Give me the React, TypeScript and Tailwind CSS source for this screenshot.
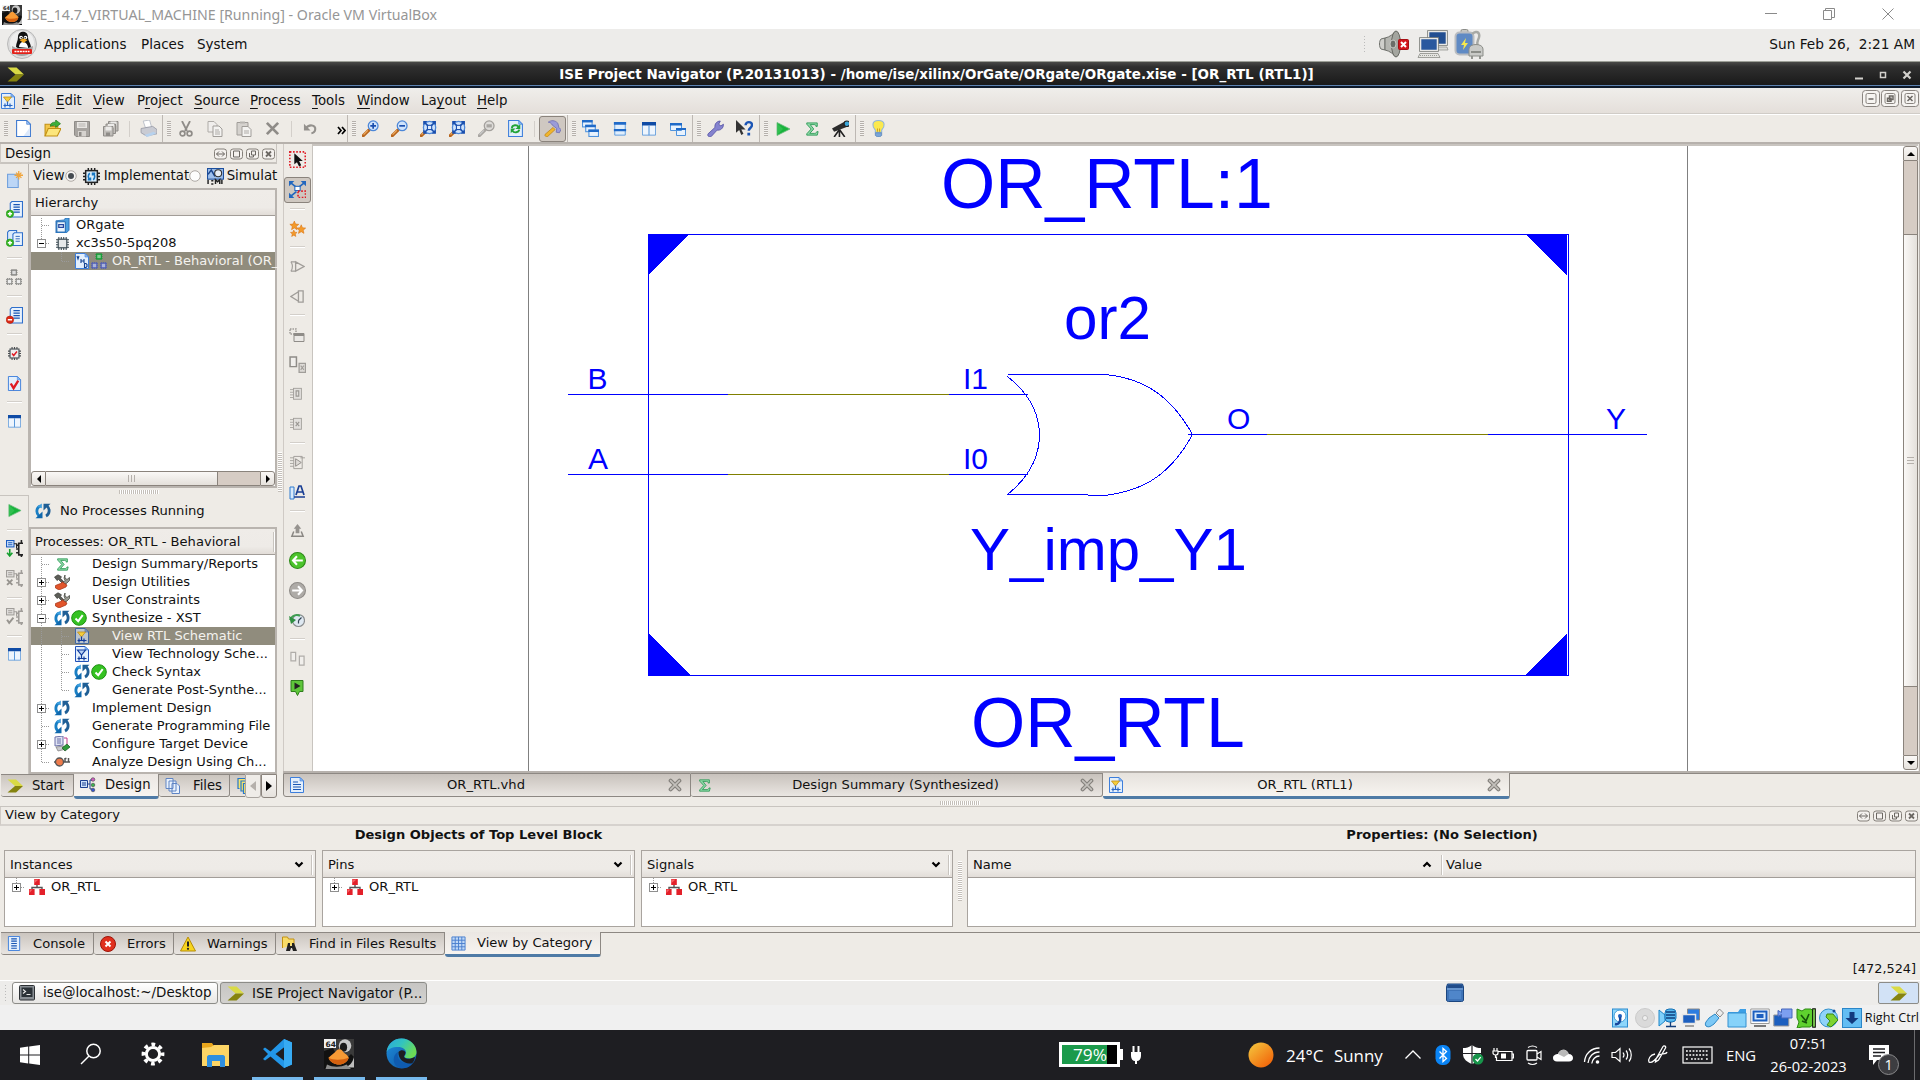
import React from "react";

type Kids = { children?: React.ReactNode };

const Ic = ({ s = 16, v = 16, c = "", children }: Kids & { s?: number; v?: number; c?: string }) => (
  <svg width={s} height={s} viewBox={`0 0 ${v} ${v}`} className={`shrink-0 ${c}`} fill="none">
    {children}
  </svg>
);

/* ---------- shared glyphs ---------- */

const Xilinx = ({ s = 17 }: { s?: number }) => (
  <Ic s={s}>
    <path d="M.5 1.500h8.500l7 6.500H8z" fill="#d9da45" />
    <path d="M.5 14.500h8.500l7-6.500H8z" fill="#85830f" />
  </Ic>
);

const Page = ({ children, s = 17, gray = false }: Kids & { s?: number; gray?: boolean }) => (
  <Ic s={s}>
    <path d="M1.500 .5h9.500l3.500 3.500v11.500h-13z" fill={gray ? "#e4e2df" : "#e3effc"} stroke={gray ? "#a3a09c" : "#3d7edb"} />
    <path d="M11 .5v3.500h3.500z" fill={gray ? "#f5f5f5" : "#8dbcf5"} stroke={gray ? "#a3a09c" : "#3d7edb"} strokeWidth=".6" />
    {children}
  </Ic>
);

const NewPage = () => (
  <Ic s={17}>
    <path d="M1.500 .5h9.500l3.500 3.500v11.500h-13z" fill="#fff" stroke="#3c78cf" />
    <path d="M8 15h6V7z" fill="#dce9fb" />
    <path d="M11 .5v3.500h3.500z" fill="#9cc4f7" stroke="#3c78cf" strokeWidth=".6" />
  </Ic>
);

const SchemPage = ({ s = 17, tech = false, dim = false }: { s?: number; tech?: boolean; dim?: boolean }) => (
  <Ic s={s}>
    <path d="M1.500 .5h9.500l3.500 3.500v11.500h-13z" fill={dim ? "#bcc4cc" : "#e3effc"} stroke={dim ? "#3f66a0" : tech ? "#2352b8" : "#3d7edb"} />
    <path d="M11 .5v3.500h3.500z" fill={dim ? "#8f9fb5" : "#8dbcf5"} stroke={dim ? "#3f66a0" : "#3d7edb"} strokeWidth=".6" />
    <path d="M3.500 4h8L7.500 9z" fill={tech ? "#b9d2f5" : "#f4cd3c"} stroke={tech ? "#123c9b" : "#c08d18"} strokeWidth={tech ? 1.200 : 0.800} />
    <path d="M7.500 8.500v4M3.500 12.500h9M5 10.500v4M10 10.500v4" stroke={tech || dim ? "#123c9b" : "#2a66c4"} strokeWidth="1.200" />
  </Ic>
);

const TextPage = ({ s = 17 }: { s?: number }) => (
  <Page s={s}>
    <path d="M4 5h5M4 7.500h8M4 10h8M4 12.500h8" stroke="#1956b4" strokeWidth="1.200" />
  </Page>
);

const Sigma = ({ s = 14 }: { s?: number }) => (
  <Ic s={s}>
    <path d="M2 1h12v4h-1.500c0-1.500-.5-2-2-2H6l4 5-4.500 5H11c1.500 0 2-.8 2.500-2H15l-1 4H2v-1.500L7 8 2 2.500z" fill="#8fd8a8" stroke="#1a9148" strokeWidth=".9" />
  </Ic>
);

const Play = ({ s = 16 }: { s?: number }) => (
  <Ic s={s}>
    <path d="M2 1.500v13L15 8z" fill="#18b33c" stroke="#6bbd7c" strokeWidth=".8" />
    <path d="M2.500 2.500v11L8 8z" fill="#4ccf67" opacity=".45" />
  </Ic>
);

const Refresh = ({ s = 16 }: { s?: number }) => (
  <Ic s={s}>
    <path d="M5 3C1 5 1 10.500 4 13" stroke="#1a7fc4" strokeWidth="2.800" />
    <path d="M.5 15.200h7V8.500z" fill="#0f68ad" />
    <path d="M11 13C15 11 15 5.500 12 3" stroke="#1f5f96" strokeWidth="2.800" />
    <path d="M15.500 .8h-7v6.700z" fill="#1f5f96" />
    <path d="M2 3.800L6.800 .6v4.600z" fill="#3c9ede" />
  </Ic>
);

const Check = () => (
  <Ic s={16}>
    <circle cx="8" cy="8" r="7.300" fill="#35c222" stroke="#1c8f10" />
    <path d="M4.500 8.500l2.700 2.700 4.500-6" stroke="#fff" strokeWidth="2" />
  </Ic>
);

const Tools = () => (
  <Ic s={16}>
    <path d="M.5 3L4 .8l3.500 2-1 1.500L12 10l-1.500 1.500L4.500 5.500 3 6.500z" fill="#5d5e58" stroke="#3e3f3b" strokeWidth=".7" />
    <path d="M11 1v3l2 1.500 2.500-2v3l-2.500 2.500L9 11.500 7.500 10 11 6.500 10 4z" fill="#96988f" stroke="#4a4b45" strokeWidth=".8" />
    <path d="M1.500 11.500l5-2 2-1.500 4.500 3-1 2-7 3-3.500-2z" fill="#e2552b" stroke="#a12e10" strokeWidth=".7" />
  </Ic>
);

const Panes = ({ s = 14 }: { s?: number }) => (
  <Ic s={s}>
    <path d="M.5 .5h15v14.500H.5z" fill="#eef5fd" stroke="#5a98da" />
    <path d="M0 0h16v4H0z" fill="#0f4ba5" />
    <path d="M8 4v11" stroke="#5a98da" strokeWidth="1.300" />
  </Ic>
);

const Chip = ({ x = 0, y = 0, col = "#9a9a97", f = "#eee" }: { x?: number; y?: number; col?: string; f?: string }) => (
  <g transform={`translate(${x} ${y})`}>
    <path d="M1.500 0v7M3.500 0v7M5.500 0v7M0 1.500h7M0 3.500h7M0 5.500h7" stroke={col} strokeWidth=".9" />
    <rect x="1.200" y="1.200" width="4.600" height="4.600" fill={f} stroke={col} strokeWidth="1.100" />
  </g>
);

const Chips = ({ gray = false, s = 16 }: { gray?: boolean; s?: number }) => (
  <Ic s={s}>
    <Chip x={4.500} y={0} col={gray ? "#858582" : "#149a36"} f={gray ? "#ddd" : "#7fcf91"} />
    <Chip x={0} y={9} col={gray ? "#8f8f8c" : "#5462b4"} f={gray ? "#eee" : "#a9b2dc"} />
    <Chip x={9} y={9} col={gray ? "#8f8f8c" : "#5462b4"} f={gray ? "#eee" : "#a9b2dc"} />
  </Ic>
);

const BlackChip = ({ blue = false, red = false, gray = false, s = 16 }: { blue?: boolean; red?: boolean; gray?: boolean; s?: number }) => (
  <Ic s={s}>
    <path d="M5 0v16M8 0v16M11 0v16M0 5h16M0 8h16M0 11h16" stroke={gray ? "#4a4d50" : "#222"} strokeWidth="1.400" />
    <rect x="2.500" y="2.500" width="11" height="11" fill={blue ? "#d7ecfb" : "#eee"} stroke={gray ? "#4a5258" : "#222"} strokeWidth="1.400" />
    {blue && <path d="M6.500 5c-2 1-2 5 0 6M9.500 11c2-1 2-5 0-6M4.500 11H7V9M11.500 5H9v2" stroke="#1878c4" strokeWidth="1.500" />}
    {red && <path d="M5 8l2 2.500L11 5.500" stroke="#e01b24" strokeWidth="1.800" />}
  </Ic>
);

const Hier = () => (
  <Ic s={16}>
    <path d="M8 5v4M3 12V8.500h10V12" stroke="#555" strokeWidth="1.400" />
    <rect x="5.200" y="0" width="5.600" height="6" fill="#e3202a" />
    <rect x="0" y="10" width="5.600" height="6" fill="#e3202a" />
    <rect x="10.400" y="10" width="5.600" height="6" fill="#e3202a" />
    <path d="M5.500 .5h4L5.500 4zM.5 10.500h3L.5 14z" fill="#ff8080" opacity=".7" />
  </Ic>
);

const ListDoc = ({ badge }: { badge?: "plus" | "minus" | "plus2" }) => (
  <Ic s={17}>
    {badge === "plus2" && <path d="M3 .5h7v10H1.500V2z" fill="#dbeafb" stroke="#2f6fcb" />}
    <path d={badge === "plus2" ? "M8 2.500h7.500v12H6.500V4z" : "M5.500 .5h10v14.500H4V2z"} fill="#e8f2fd" stroke="#2f6fcb" />
    <path d={badge === "plus2" ? "M9 6h4M9 8.300h4M9 10.600h4" : "M7 3.500h6M7 5.800h6M7 8.100h6M7 10.400h6"} stroke="#1956b4" strokeWidth={badge === "plus2" ? 0.800 : 1.200} />
    <circle cx="3.700" cy="12" r="3.500" fill={badge === "minus" ? "#dd2a16" : "#35b522"} stroke={badge === "minus" ? "#a81408" : "#1f8d12"} strokeWidth=".5" />
    <path d={badge === "minus" ? "M1.700 12h4" : "M1.700 12h4M3.700 10v4"} stroke="#fff" strokeWidth="1.400" />
  </Ic>
);

const Zoom = ({ kind, gray = false }: { kind: "in" | "out" | "fit" | "sel"; gray?: boolean }) => (
  <Ic s={17}>
    <path d="M1.200 14.800L6.500 9.500" stroke={gray ? "#a9a6a2" : "#b8651c"} strokeWidth="3" strokeLinecap="round" />
    <path d="M1.500 13.800L5.500 9.800" stroke={gray ? "#ccc" : "#efae62"} strokeWidth="1" />
    <circle cx={kind === "fit" ? 9 : 10.500} cy={kind === "fit" ? 7 : 5.500} r={kind === "fit" ? 5.800 : 4.600} fill={gray ? "#dedcd9" : "#cfe3fb"} stroke={gray ? "#a3a09c" : "#4c87d8"} strokeWidth="1.200" />
    {kind === "in" && <path d="M7.800 5.500h5.400M10.500 2.800v5.400" stroke="#1a4fae" strokeWidth="1.600" />}
    {kind === "out" && <path d="M7.800 5.500h5.400" stroke="#1a4fae" strokeWidth="1.600" />}
    {kind === "fit" && (
      <g>
        <path d="M4 2l10 10M14 2L4 12" stroke="#1a4fae" strokeWidth="1.500" />
        <path d="M3 1h4L3 5zM15 1v4l-4-4zM3 13V9l4 4zM15 13h-4l4-4z" fill="#1a4fae" />
        <rect x="7" y="5" width="4" height="4" fill="#dcebfd" stroke="#1a4fae" />
      </g>
    )}
    {kind === "sel" && <rect x="8" y="4" width="5" height="3" fill="#a9a6a2" />}
  </Ic>
);

const Floppy = () => (
  <Ic s={16}>
    <path d="M.5 .5h15v15H2L.5 14z" fill="#a8a5a1" stroke="#8f8c88" />
    <path d="M3 1h10v6H3z" fill="#e8e6e3" />
    <path d="M4.500 3h7M4.500 5h7" stroke="#b5b2ae" />
    <path d="M4 10h8v5.500H4z" fill="#d6d3cf" />
    <path d="M5 11h2.500v4H5z" fill="#8f8c88" />
  </Ic>
);

const Floppies = () => (
  <Ic s={16}>
    {[[5.500, 0.500], [3, 3], [0.500, 5.500]].map(([x, y]) => (
      <g key={x} transform={`translate(${x} ${y})`}>
        <path d="M0 0h9.500v9.500H0z" fill="#c0bdb9" stroke="#8f8c88" />
        <path d="M2 0h6v4H2z" fill="#ecebe9" />
        <path d="M2.500 6h4v3.500h-4z" fill="#8f8c88" />
      </g>
    ))}
  </Ic>
);

const GreenBall = ({ gray = false, back = false }: { gray?: boolean; back?: boolean }) => (
  <Ic s={17}>
    <circle cx="8" cy="8" r="7.500" fill={gray ? "#aeaba7" : "#4cc42c"} stroke={gray ? "#8f8c88" : "#2e8a1a"} />
    <path d={back ? "M13 8H4M7.500 4L3.800 8l3.700 4" : "M3 8h9M8.500 4l3.700 4-3.700 4"} stroke="#fff" strokeWidth="2" />
  </Ic>
);

const GrayChipPanel = ({ mark, s = 16 }: { mark: string; s?: number }) => (
  <Ic s={s}>
    <path d="M0 3h4M0 6h4M0 9h4M0 12h4" stroke="#a5a29e" />
    <rect x="4" y="1.500" width="9" height="12.500" fill="#e2e0dd" stroke="#a09d99" />
    <path d={mark} stroke="#9a9793" strokeWidth="1.300" />
  </Ic>
);

const ProcChip = ({ on = false, mark = "" }: { on?: boolean; mark?: string }) => {
  const k = on ? "#222" : "#a09d99";
  return (
    <Ic s={17}>
      <rect x=".5" y=".5" width="7" height="6" fill={on ? "#cfe3fb" : "#e4e2df"} stroke={on ? "#1b5cc0" : "#a09d99"} />
      <path d="M2 2.500h4M2 4.500h4" stroke={on ? "#1b5cc0" : "#a09d99"} />
      <path d="M7.500 3.500h2.500v4" stroke={k} strokeWidth="1.100" />
      <path d="M16 3h-4v11h4" stroke={k} strokeWidth="1.500" />
      <path d="M12 5h-2.500M12 8.500h-2.500M12 12h-2.500M14.500 0v3M14.500 14v2" stroke={k} strokeWidth="1.500" />
      {on ? <path d="M3.500 8.500v6M1 12l2.500 3L6 12" stroke="#159f2f" strokeWidth="1.500" /> : <path d={mark} stroke="#97948f" strokeWidth="1.800" />}
    </Ic>
  );
};

/* ---------- window furniture ---------- */

const DockButtons = () => (
  <div className="flex gap-[3px]">
    {["M2.500 5.500h8M5 3L2.500 5.500 5 8M8 3l2.500 2.500L8 8", "M3.500 2.500h6v6h-6z", "M5.500 2.500h4v4h-4zM3.500 4.500v4h4v-2", "M4 3l5 5M9 3L4 8"].map((d, i) => (
      <svg key={i} width="13" height="12" viewBox="0 0 13 11" fill="none">
        <rect x=".5" y=".5" width="12" height="10" rx="2.500" fill="#f4f1ee" stroke="#85807a" />
        <path d={d} stroke="#6b6762" strokeWidth={i === 3 ? 1.800 : 1} />
      </svg>
    ))}
  </div>
);

const HGrip = () => <div className="h-[4px] w-[40px] bg-[repeating-linear-gradient(90deg,#c4bfb9_0_1px,#fff_1px_2px)]" />;
const VGrip = () => <div className="h-[40px] w-[4px] bg-[repeating-linear-gradient(0deg,#c4bfb9_0_1px,#fff_1px_2px)]" />;

const ToolGroup = ({ w, first, children }: Kids & { w: string; first?: boolean }) => (
  <div className={`flex h-full shrink-0 items-center ${w} ${first ? "" : "border-l border-[#bdb8b3]"}`}>
    <div className={`ml-[4px] h-[15px] w-[4px] shrink-0 bg-[repeating-linear-gradient(0deg,#b5b0ab_0_1px,#f5f3f0_1px_2px)] ${first ? "mr-[1px]" : ""}`} />
    {children}
  </div>
);
const Cell = ({ children }: Kids) => <div className="flex w-[29px] shrink-0 items-center justify-center">{children}</div>;
const Sep = () => <div className="mx-[4px] h-[16px] w-px shrink-0 bg-[#d3cfca]" />;
const VCell = ({ children }: Kids) => <div className="flex h-[29.600px] shrink-0 items-center justify-center">{children}</div>;
const VSep = () => (
  <div className="flex h-[8.600px] shrink-0 items-center justify-center">
    <div className="h-[2px] w-[15px] border-t border-[#d3cfca] bg-white" />
  </div>
);

const WinBox = ({ d }: { d: string }) => (
  <Ic s={18} v={18}>
    <rect x=".5" y=".5" width="17" height="16" rx="3" fill="#f6f4f1" stroke="#8a8580" />
    <rect x="4" y="3.500" width="10" height="10" rx="1.500" stroke="#8a8580" />
    <path d={d} stroke="#6b6762" strokeWidth="1.500" />
  </Ic>
);

/* ---------- trees ---------- */

const Dots = ({ d }: { d: string }) => <path d={d} stroke="#9a9a9a" strokeDasharray="1 1" shapeRendering="crispEdges" />;
const Expander = ({ x, y, open }: { x: number; y: number; open?: boolean }) => (
  <g shapeRendering="crispEdges">
    <rect x={x - 4} y={y - 4} width="8" height="8" fill="#fff" stroke="#8f8f8f" />
    <path d={open ? `M${x - 2.500} ${y}h5` : `M${x - 2.500} ${y}h5M${x} ${y - 2.500}v5`} stroke="#000" />
  </g>
);

type Row = { t: string; lvl: 1 | 2; box?: "+" | "-"; sel?: boolean; first?: boolean; last?: boolean; trunk?: boolean; a: React.ReactNode; b?: React.ReactNode; tight?: boolean };

const TreeRow = ({ t, lvl, box, sel, first, last, trunk = true, a, b, tight }: Row) => (
  <div className={`flex h-[18px] items-center whitespace-nowrap text-[13px] ${sel ? "bg-[#908c7d] text-[#f4f2ee]" : ""}`}>
    <svg width={lvl === 1 ? 22 : 42} height="18" className="shrink-0" fill="none">
      {lvl === 1 ? (
        <>
          <Dots d={`M10.500 ${first ? 2 : 0}V${last ? 10 : 18}`} />
          <Dots d="M11 9.500h8" />
          {box && <Expander x={10.500} y={9.500} open={box === "-"} />}
        </>
      ) : (
        <>
          {trunk && <Dots d="M10.500 0V18" />}
          <Dots d={`M30.500 0V${last ? 10 : 18}`} />
          <Dots d="M31 9.500h8" />
        </>
      )}
    </svg>
    <div className="flex w-[18px] shrink-0 justify-center">{a}</div>
    <div className={`flex shrink-0 ${tight ? "w-[5px]" : "w-[21px]"}`}>{b}</div>
    <span className="pb-px">{t}</span>
  </div>
);

const Header = ({ children, c = "h-[26px]" }: Kids & { c?: string }) => (
  <div className={`flex shrink-0 items-center border-b border-[#a29d98] bg-linear-to-b from-[#efece8] via-[#eeebe7] via-70% to-[#e2ddd8] ${c}`}>{children}</div>
);

const HArrow = ({ up }: { up?: boolean }) => (
  <svg width="10" height="7" viewBox="0 0 10 7" className="shrink-0" fill="none">
    <path d={up ? "M1.500 5.500L5 2l3.500 3.500" : "M1.500 1.500L5 5l3.500-3.500"} stroke="#000" strokeWidth="2.200" />
  </svg>
);

const SbBtn = ({ d, c }: { d: string; c: string }) => (
  <div className={`flex shrink-0 items-center justify-center border border-[#8a837c] bg-linear-to-b from-[#faf8f6] to-[#e6e2dd] ${c}`}>
    <svg width="8" height="8" viewBox="0 0 8 8">
      <path d={d} fill="#000" />
    </svg>
  </div>
);

const Tab = ({ w, icon, label, sel, gap = "ml-[10px]" }: { w: string; icon: React.ReactNode; label: string; sel?: boolean; gap?: string }) => (
  <div
    className={`flex shrink-0 items-center whitespace-nowrap rounded-b-[3px] border-r border-[#8d8883] pl-[5px] ${w} ${
      sel ? "h-[25px] border-b-[3px] border-b-[#4f7ba6] bg-linear-to-b from-[#ebe7e3] to-[#f7f4f0]" : "h-[23px] border-b border-t border-b-[#8d8883] border-t-[#8d8883] bg-linear-to-b from-[#cbc5bf] to-[#e9e5e1]"
    }`}
  >
    <div className="flex w-[17px] shrink-0 justify-center">{icon}</div>
    <span className={gap}>{label}</span>
  </div>
);

const CloseX = () => (
  <Ic s={14}>
    <path d="M3 3l10 10M13 3L3 13" stroke="#85827d" strokeWidth="4.500" strokeLinecap="round" />
    <path d="M3 3l10 10M13 3L3 13" stroke="#c4c1bc" strokeWidth="1.800" strokeLinecap="round" />
  </Ic>
);

const EditorTab = ({ w, icon, label, sel }: { w: string; icon: React.ReactNode; label: string; sel?: boolean }) => (
  <div
    className={`flex shrink-0 items-center border-r border-[#8d8883] pl-[4px] pr-[8px] ${w} ${
      sel ? "h-[26px] rounded-b-[3px] border-b-[3px] border-b-[#4f7ba6] bg-linear-to-b from-[#e6e2dd] to-[#f7f4f0]" : "h-[24px] border-b border-t border-b-[#8d8883] border-t-[#8d8883] bg-linear-to-b from-[#c8c2bc] to-[#eae6e2]"
    }`}
  >
    <div className="flex w-[18px] justify-center">{icon}</div>
    <span className="flex-1 pr-[2px] text-center">{label}</span>
    <CloseX />
  </div>
);

/* ---------- title, panels, menus ---------- */

const Tux64 = ({ s }: { s: number }) => (
  <Ic s={s} v={20}>
    <rect width="20" height="20" fill="#3a3a3a" />
    <path d="M0 20V8l6-2 3 6 5 2 4-4 2 2v8z" fill="#111" />
    <path d="M20 12c-1 4-3 6-6 7h6z" fill="#bdbdbd" />
    <path d="M2 17c4 2 9 2 13 0l3 3H1z" fill="#8d8d8d" />
    <ellipse cx="14" cy="4.500" rx="4.200" ry="4.300" fill="#c9c9c9" />
    <ellipse cx="13" cy="5.500" rx="2.400" ry="3" fill="#1b1b1b" />
    <path d="M3 12.500c2-2 4-3 5.500-5 1-1 2.500-1 3.500 0 1 2 4 3 4.500 5-1 3-3.500 4.500-6.500 4.500S4 15.500 3 12.500z" fill="#f79a35" />
    <path d="M3 12.500c4 2 9 1.500 13.500 0-1 3-3.500 4.500-6.500 4.500S4 15.500 3 12.500z" fill="#d4600f" />
    <rect width="8" height="6" fill="#f2f2f2" />
    <text x="1" y="5" fontSize="5" fontWeight="bold" fontFamily="DejaVu Sans, sans-serif" fill="#222">64</text>
  </Ic>
);

const WindowsTitle = () => (
  <div className="flex h-[29px] shrink-0 items-center bg-white pl-[2px]">
    <Tux64 s={20} />
    <span className="ml-[5px] whitespace-pre font-['Noto_Sans','Segoe_UI',sans-serif] text-[14.180px] text-[#969696]">ISE_14.7_VIRTUAL_MACHINE [Running] - Oracle VM VirtualBox</span>
    <svg width="149" height="14" fill="none" stroke="#8a8a8a" className="mb-px ml-auto mr-[8px]">
      <path d="M2 6.500h12M60.500 3.500h8v9h-8zM62.500 3V1.500h9v9H69M119.500 1.500l11 11M130.500 1.500l-11 11" />
    </svg>
  </div>
);

const GnomeTop = () => (
  <div className="flex h-[33px] shrink-0 items-center border-b border-[#9c9f97] bg-[#edecea] pb-[2px] text-[13.500px]">
    <Ic s={30} v={30} c="ml-[7px]">
      <circle cx="15" cy="15" r="14.500" fill="#dcdcdc" stroke="#b9b9b9" />
      <circle cx="15" cy="14" r="12" fill="#eee" />
      <path d="M9 18c0-4 2-6 2-10 0-7 10-7 10 0 0 4 3 6 3 11-4 2-11 2-15-1z" fill="#111" />
      <path d="M12 18c0-3 2-5 4-5s5 2 5 6z" fill="#fff" />
      <circle cx="14" cy="8.500" r="1.800" fill="#fff" />
      <circle cx="18.500" cy="8.500" r="1.800" fill="#fff" />
      <circle cx="14.300" cy="8.800" r=".8" fill="#111" />
      <circle cx="18.200" cy="8.800" r=".8" fill="#111" />
      <path d="M12.500 11l4-1.500 4 1.500-4 3z" fill="#f2a81d" />
      <path d="M5 17l4 2h12l5-2c0 5-4 10-11 10S5 22 5 17z" fill="#a3a3a3" />
      <rect x="5" y="20" width="20" height="5" rx="1" fill="#e32119" />
      <path d="M7.500 22.500h15" stroke="#fff" strokeWidth="1.500" strokeDasharray="2 .7" />
    </Ic>
    <span className="ml-[7px] w-[97px]">Applications</span>
    <span className="w-[56px]">Places</span>
    <span>System</span>
    <div className="ml-auto flex items-center">
      <div className="mr-[12px] h-[18px] w-[4px] bg-[radial-gradient(#bbb_30%,transparent_35%)] bg-[size:3px_3px]" />
      <svg width="32" height="30" viewBox="0 0 32 30" fill="none">
        <path d="M2 10l4-1v12l-4-1C0 18 0 12 2 10z" fill="#cfcfcb" stroke="#6f716c" />
        <path d="M6 9c5-1 8-4 11-7v26c-3-3-6-6-11-7z" fill="#b5b6b1" stroke="#6f716c" />
        <ellipse cx="17" cy="15" rx="4.500" ry="13" fill="#a3a59f" stroke="#666862" />
        <ellipse cx="14" cy="15" rx="3" ry="4" fill="#6b6d68" stroke="#c8c9c4" />
        <rect x="19.500" y="10.500" width="10" height="10" rx="1" fill="#d3141b" stroke="#a70f14" />
        <path d="M22 13l5 5M27 13l-5 5" stroke="#fff" strokeWidth="2" />
      </svg>
      <svg width="32" height="30" viewBox="0 0 32 30" fill="none" className="ml-[6px]">
        <path d="M11.500 2.500h18v13h-18z" fill="#234f91" stroke="#e9e9e6" strokeWidth="1.600" />
        <path d="M10.500 1.500h20v15h-20z" stroke="#7b7d78" strokeWidth=".8" />
        <path d="M20 18h10l1 3H20z" fill="#dcdcd8" stroke="#8b8d88" strokeWidth=".7" />
        <path d="M3.500 9.500h17v12h-17z" fill="#2a589e" stroke="#e9e9e6" strokeWidth="1.600" />
        <path d="M2.500 8.500h19v14h-19z" stroke="#7b7d78" strokeWidth=".8" />
        <path d="M3 24.500h18l2 4H1z" fill="#e4e4e0" stroke="#8b8d88" strokeWidth=".8" />
        <path d="M3 26.500h18" stroke="#9a9c96" strokeDasharray="1 1" />
      </svg>
      <svg width="32" height="31" viewBox="0 0 32 31" fill="none" className="ml-[5px]">
        <rect x="7" y=".5" width="7" height="4" rx="1.500" fill="#c6c7c4" stroke="#8b8d88" />
        <rect x="1.500" y="3.500" width="18" height="22" rx="4" fill="#5f8ac4" stroke="#b9bcc0" strokeWidth="2" />
        <path d="M12 9l-5 7h3l-1 5 5-7h-3z" fill="#f5e94e" />
        <path d="M18 5c6-5 9 0 6 6-1 2-1 4 0 6" stroke="#a7a9a5" strokeWidth="2.500" />
        <path d="M15 20c0-6 14-6 14 0v7H15z" fill="#c9cac7" stroke="#8b8d88" />
        <path d="M18 27v3M26 27v3M17 23h10" stroke="#8b8d88" strokeWidth="1.800" />
      </svg>
      <span className="ml-[283px] mr-[5px] whitespace-pre text-[13.700px]">Sun Feb 26,  2:21 AM</span>
    </div>
  </div>
);

const WindowBar = () => (
  <div className="grid h-[26px] shrink-0 grid-cols-[80px_1fr_80px] items-center border-b-2 border-[#0e1a2b] bg-linear-to-b from-[#4a4a48] via-[#2f2f2f] via-20% to-[#191919] shadow-[inset_0_-1px_0_#5d82b0]">
    <div className="pl-[7px]">
      <Xilinx s={17} />
    </div>
    <div className="whitespace-nowrap pr-[47px] text-center text-[13.480px] font-bold leading-[22px] text-white">ISE Project Navigator (P.20131013) - /home/ise/xilinx/OrGate/ORgate/ORgate.xise - [OR_RTL (RTL1)]</div>
    <svg width="80" height="20" fill="none">
      <path d="M15 14.500h8" stroke="#d2d0cc" strokeWidth="2" />
      <path d="M40.500 8.500h5v5h-5z" stroke="#d2d0cc" strokeWidth="1.500" />
      <path d="M63.500 7.500l7 7M70.500 7.500l-7 7" stroke="#d2d0cc" strokeWidth="2.200" />
    </svg>
  </div>
);

const menus: [string, string, string, string][] = [
  ["", "F", "ile", "w-[34px]"],
  ["", "E", "dit", "w-[37px]"],
  ["", "V", "iew", "w-[44px]"],
  ["P", "r", "oject", "w-[57px]"],
  ["", "S", "ource", "w-[56px]"],
  ["", "P", "rocess", "w-[62px]"],
  ["", "T", "ools", "w-[45px]"],
  ["", "W", "indow", "w-[64px]"],
  ["La", "y", "out", "w-[56px]"],
  ["", "H", "elp", "w-[50px]"],
];

const MenuBar = () => (
  <div className="flex h-[26px] shrink-0 items-center border-b border-[#d0ccc7] bg-linear-to-b from-[#f0eeeb] to-[#e4dfda] pt-[1px] text-[13.330px]">
    <SchemPage s={16} />
    <div className="ml-[6px] flex">
      {menus.map(([a, u, b, w]) => (
        <span key={u + b} className={w}>
          {a}
          <span className="underline underline-offset-[3px]">{u}</span>
          {b}
        </span>
      ))}
    </div>
    <div className="mb-[4px] ml-auto mr-[1px] flex">
      <WinBox d="M6.500 9h5" />
      <span className="ml-[1px]">
        <WinBox d="M8.500 6h3.500v3.500h-3.500zM6.500 8.200h3.500v3H6.500z" />
      </span>
      <span className="ml-[2px]">
        <WinBox d="M6.500 6l5 5M11.500 6l-5 5" />
      </span>
    </div>
  </div>
);

const ToolBar = () => (
  <div className="flex h-[30px] shrink-0 items-center border-b-2 border-t border-b-[#b6b1ac] border-t-white bg-[#eeebe6]">
    <ToolGroup w="w-[162px]" first>
      <Cell><NewPage /></Cell>
      <Cell>
        <Ic s={17}>
          <path d="M1 15V4h5l1.500 2H13v3" fill="#f2c64a" stroke="#c29013" />
          <path d="M1 15l3-7h12l-3.500 7z" fill="#fce67c" stroke="#c29013" />
          <path d="M6 6c0-3 2-4 5-4V0l4.500 3.500L11 7V5C9 5 8 5 6 6z" fill="#3db03a" stroke="#1f7d1f" strokeWidth=".7" />
        </Ic>
      </Cell>
      <Cell><Floppy /></Cell>
      <Cell><Floppies /></Cell>
      <Sep />
      <Cell>
        <Ic s={17}>
          <path d="M3 1l6-1 2 7H5z" fill="#fff" stroke="#b3b9c4" strokeWidth=".8" />
          <path d="M1 8l11-2 4 3v4l-10 2-5-3z" fill="#c9cbd3" stroke="#989ba6" strokeWidth=".8" />
          <path d="M4 14l9-3 2 2-8 3z" fill="#b7d2ee" />
        </Ic>
      </Cell>
    </ToolGroup>
    <ToolGroup w="w-[185px]">
      <Cell>
        <Ic s={16}>
          <path d="M4 0l5 10M12 0L7 10" stroke="#8f8c88" strokeWidth="1.800" />
          <circle cx="4.500" cy="12.500" r="2.400" stroke="#8f8c88" strokeWidth="1.700" />
          <circle cx="11.500" cy="12.500" r="2.400" stroke="#8f8c88" strokeWidth="1.700" />
        </Ic>
      </Cell>
      <Cell>
        <Ic s={16}>
          <path d="M1 .5h6l3 3V11H1z" fill="#f0eeec" stroke="#aeaba7" />
          <path d="M6 5h6l3 3v7.500H6z" fill="#f4f3f1" stroke="#a09d99" />
          <path d="M8 9h4M8 11h5M8 13h5" stroke="#aeaba7" />
        </Ic>
      </Cell>
      <Cell>
        <Ic s={16}>
          <path d="M1 1.500h11V14H1z" fill="#d5d2ce" stroke="#a09d99" />
          <path d="M4 .5h5v2H4z" fill="#b7b4b0" />
          <path d="M6 5.500h6l3 3v7H6z" fill="#f4f3f1" stroke="#a09d99" />
          <path d="M8 10h5M8 12h5" stroke="#aeaba7" />
        </Ic>
      </Cell>
      <Cell>
        <Ic s={15}><path d="M2 2l12 12M14 2L2 14" stroke="#8f8c88" strokeWidth="3" /></Ic>
      </Cell>
      <Sep />
      <Cell>
        <Ic s={15}>
          <path d="M3 8c3-5 11-4 10 1 0 2-2 4-4 4" stroke="#94918d" strokeWidth="2.300" />
          <path d="M1 3v7h7z" fill="#94918d" />
        </Ic>
      </Cell>
      <Ic s={9} v={9} c="ml-[12px] mt-[3px]"><path d="M1 1l3 3.500L1 8M5 1l3 3.500L5 8" stroke="#000" strokeWidth="1.700" /></Ic>
    </ToolGroup>
    <ToolGroup w="w-[220px]">
      <Cell><Zoom kind="in" /></Cell>
      <Cell><Zoom kind="out" /></Cell>
      <Cell><Zoom kind="fit" /></Cell>
      <Cell><Zoom kind="fit" /></Cell>
      <Cell><Zoom kind="sel" gray /></Cell>
      <Cell>
        <Page>
          <path d="M4.500 7.500C5 4.500 9.500 4 11 6.500M11.500 9C11 12 6.500 12.500 5 10" stroke="#22a437" strokeWidth="1.800" />
          <path d="M12.500 4v4.500H8zM3.500 12.500V8H8z" fill="#22a437" />
        </Page>
      </Cell>
      <Sep />
      <div className="flex h-[26px] w-[27px] shrink-0 items-center justify-center rounded-[3px] border border-[#8a837c] bg-[#cfc8c1]">
        <Ic s={17}>
          <path d="M1 13.500L8.500 7l2 2-7 6.500c-1 .8-3.500-.5-2.500-2z" fill="#f0b52c" stroke="#b57a12" strokeWidth=".6" />
          <path d="M4 2c3-2 6-2 9 1l1 4 2 2-1.500 3-3-.5L12 8 8 5C7 3 6 2.500 4 2z" fill="#9a9bd9" stroke="#6767b0" strokeWidth=".7" />
        </Ic>
      </div>
    </ToolGroup>
    <ToolGroup w="w-[124.500px]">
      <Cell>
        <Ic s={17}>
          {[[0.500, 0.500], [3.500, 5], [6.500, 9.500]].map(([x, y]) => (
            <g key={x}>
              <rect x={x} y={y} width="9" height="6" fill="#e8f2fd" stroke="#4f93dd" />
              <rect x={x - 0.500} y={y - 0.500} width="10" height="2.300" fill="#1f6ac8" />
            </g>
          ))}
        </Ic>
      </Cell>
      <Cell>
        <Ic s={14}>
          <path d="M2 1h12v14H2z" fill="#e0eefc" stroke="#4f93dd" />
          <path d="M1 0h14v3H1zM1 8h14v2.500H1z" fill="#1f6ac8" />
        </Ic>
      </Cell>
      <Cell><Panes s={14} /></Cell>
      <Cell>
        <Ic s={16}>
          <path d="M.5 2.500h11v7H.5zM6.500 7.500h9v7h-9z" fill="#e8f2fd" stroke="#4f93dd" />
          <path d="M0 2h12v2.500H0zM6 7h10v2H6z" fill="#1f6ac8" />
        </Ic>
      </Cell>
    </ToolGroup>
    <ToolGroup w="w-[67.500px]">
      <Cell>
        <Ic s={17}>
          <path d="M1 13l6.500-6C7 4 9 1 12.500 1L11 4l2 1.500 2.500-1.500c0 4-3 6-6 5.500L4 15.500C2 16.500 0 15 1 13z" fill="#8583cf" stroke="#5755a5" strokeWidth=".8" />
        </Ic>
      </Cell>
      <Cell>
        <Ic s={17}>
          <path d="M0 0v12l3-2.500L5 14l2-1-2-4h4z" fill="#333" />
          <path d="M9 5c0-4 6.500-4 6 0 0 2.500-3 2.500-3 5" stroke="#1b55b5" strokeWidth="2.300" />
          <path d="M10.700 12h2.600v2.600h-2.600z" fill="#1b55b5" />
        </Ic>
      </Cell>
    </ToolGroup>
    <ToolGroup w="w-[96px]">
      <Cell><Play /></Cell>
      <Cell><Sigma /></Cell>
      <Cell>
        <Ic s={17}>
          <path d="M0 8l2 3L15 6l-2-5z" fill="#2c2c2c" />
          <circle cx="14" cy="3.500" r="2.600" fill="#3ba6d8" stroke="#222" />
          <path d="M7 9L2 16M7 9v7M7 9l5 7" stroke="#222" strokeWidth="1.500" />
        </Ic>
      </Cell>
    </ToolGroup>
    <ToolGroup w="w-[50px]">
      <Cell>
        <Ic s={17}>
          <path d="M8 .5c7 0 6 6 3 9v2H5v-2C2 6.500 1 .5 8 .5z" fill="#fbe94e" stroke="#8fb6dc" />
          <path d="M5 12h6v2.500L9 16H7l-2-1.500z" fill="#7aa5d8" stroke="#4b79b0" strokeWidth=".6" />
          <path d="M7 8v3M9 8v3" stroke="#c98d12" strokeWidth=".8" />
        </Ic>
      </Cell>
    </ToolGroup>
  </div>
);

/* ---------- left docks ---------- */

const DesignDock = () => (
  <div className="flex h-[344px] shrink-0 flex-col">
    <div className="flex h-[20px] shrink-0 items-center border-b-2 border-l border-r border-b-[#c8c4bf] border-l-[#cfcac5] border-r-[#c8c4bf] pl-[4px] pr-[1px] pt-[1px] text-[13.330px]">
      <span className="flex-1 leading-none">Design</span>
      <DockButtons />
    </div>
    <div className="flex min-h-0 flex-1">
      <div className="w-[29px] shrink-0 border-r border-[#bab5b0] pt-[1px]">
        <VCell>
          <Ic s={17}>
            <path d="M1.500 3h10v12.500h-10z" fill="#bcd6f6" stroke="#6f9fdc" />
            <path d="M12 0v8M8 4h8M9.500 1.500l5 5M14.500 1.500l-5 5" stroke="#f0a53c" strokeWidth="1.200" />
          </Ic>
        </VCell>
        <VCell><ListDoc badge="plus" /></VCell>
        <VCell><ListDoc badge="plus2" /></VCell>
        <VSep />
        <VCell><Chips gray /></VCell>
        <VSep />
        <VCell><ListDoc badge="minus" /></VCell>
        <VSep />
        <VCell><BlackChip red gray s={13} /></VCell>
        <VCell><Page s={15}><path d="M4 8l3 5 5-8" stroke="#e01b24" strokeWidth="2.500" /></Page></VCell>
        <VSep />
        <VCell><Panes s={13} /></VCell>
      </div>
      <div className="flex min-w-0 flex-1 flex-col">
        <div className="flex h-[24px] shrink-0 items-center whitespace-nowrap pl-[4px] text-[13.330px]">
          <span className="w-[32px]">View</span>
          <Ic s={12} c="mr-[6px]"><circle cx="8" cy="8" r="7" fill="#f6f4f2" stroke="#98928c" /><circle cx="8" cy="8" r="4" fill="#454b50" /></Ic>
          <BlackChip blue s={17} />
          <span className="ml-[4px] w-[83px]">Implementat</span>
          <Ic s={12} c="ml-[2px] mr-[6px]"><circle cx="8" cy="8" r="7" fill="#fdfdfc" stroke="#98928c" /></Ic>
          <Ic s={17}>
            <rect x=".5" y=".5" width="15" height="10" fill="#9fc0ec" stroke="#1c4f9e" />
            <path d="M1 6l3-4 3 5 3-5" stroke="#17428a" strokeWidth="1.400" />
            <circle cx="10.500" cy="5" r="3.300" fill="#e8eef5" stroke="#333" />
            <path d="M1 15v-4M4 15h2M4 12h2M8 15v-4l2 2 2-2v4M14 15v-4" stroke="#222" strokeWidth="1.400" />
          </Ic>
          <span className="ml-[3px]">Simulat</span>
        </div>
        <div className="flex min-h-0 flex-1 flex-col border-2 border-[#b9b4af] bg-white">
          <Header c="h-[26px] pl-[4px]">Hierarchy</Header>
          <div className="flex-1">
            <TreeRow t="ORgate" lvl={1} first tight a={<Ic s={15}><path d="M1 3l9-1 1-2h4v13l-3 3H1z" fill="#4c9fde" stroke="#1c62ae" strokeWidth=".8" /><path d="M2 4h9v11H2z" fill="#e9f3fc" stroke="#1c62ae" /><path d="M4 7h5v3H4z" stroke="#2747a0" strokeWidth="1.300" /></Ic>} />
            <TreeRow t="xc3s50-5pq208" lvl={1} box="-" last tight a={<Ic s={13}><path d="M3.500 0v16M6.500 0v16M9.500 0v16M12.500 0v16M0 3.500h16M0 6.500h16M0 9.500h16M0 12.500h16" stroke="#3b4a52" strokeWidth="1.300" /><rect x="2.700" y="2.700" width="10.600" height="10.600" fill="#e6e9ea" stroke="#3b4a52" strokeWidth="1.400" /></Ic>} />
            <TreeRow
              t="OR_RTL - Behavioral (OR_"
              lvl={2}
              last
              sel
              trunk={false}
              a={<Page s={16}><path d="M3 3l1 3 1-3M7 6v4M10 6v4M7 8h3M10.500 10.500v4h1.500l1-1v-2l-1-1z" stroke="#12408f" strokeWidth="1.100" /></Page>}
              b={<Chips s={16} />}
            />
          </div>
          <div className="flex h-[15px] shrink-0">
            <SbBtn c="w-[15px] rounded-l-[3px]" d="M6 0v8L2 4z" />
            <div className="flex w-[171px] items-center justify-center gap-[2px] border-y border-[#8a837c] bg-linear-to-b from-[#faf8f6] to-[#e4e0db]">
              <i className="h-[7px] w-px bg-[#b5b0ab]" />
              <i className="h-[7px] w-px bg-[#b5b0ab]" />
              <i className="h-[7px] w-px bg-[#b5b0ab]" />
            </div>
            <div className="flex-1 border-y border-l border-[#8a837c] bg-[#d6ccc4]" />
            <SbBtn c="w-[15px] rounded-r-[3px]" d="M2 0v8l4-4z" />
          </div>
        </div>
      </div>
    </div>
  </div>
);

const processes: Row[] = [
  { t: "Design Summary/Reports", lvl: 1, first: true, a: <Sigma s={13} /> },
  { t: "Design Utilities", lvl: 1, box: "+", a: <Tools /> },
  { t: "User Constraints", lvl: 1, box: "+", a: <Tools /> },
  { t: "Synthesize - XST", lvl: 1, box: "-", a: <Refresh />, b: <Check /> },
  { t: "View RTL Schematic", lvl: 2, sel: true, a: <SchemPage s={16} dim /> },
  { t: "View Technology Sche...", lvl: 2, a: <SchemPage s={16} tech /> },
  { t: "Check Syntax", lvl: 2, a: <Refresh />, b: <Check /> },
  { t: "Generate Post-Synthe...", lvl: 2, last: true, a: <Refresh /> },
  { t: "Implement Design", lvl: 1, box: "+", a: <Refresh /> },
  { t: "Generate Programming File", lvl: 1, a: <Refresh /> },
  {
    t: "Configure Target Device",
    lvl: 1,
    box: "+",
    a: (
      <Ic s={16}>
        <path d="M1 1l8-1v9l-8 1z" fill="#dfe3f3" stroke="#6a6fa8" />
        <path d="M3 3h4M3 5h4M3 7h4" stroke="#6a6fa8" />
        <path d="M2 11l8-1 2 3-8 2z" fill="#c9c9cf" stroke="#777" strokeWidth=".7" />
        <path d="M10 2h3v6" stroke="#c23c8a" />
        <path d="M8 12l5-4 3 3-5 4z" fill="#2f9b3c" stroke="#164f1c" strokeWidth=".7" />
      </Ic>
    ),
  },
  {
    t: "Analyze Design Using Ch...",
    lvl: 1,
    last: true,
    a: (
      <Ic s={16}>
        <circle cx="5.500" cy="8" r="4" fill="#ee7b4b" stroke="#555" strokeWidth="1.300" />
        <path d="M0 8h2M9 8h7M11 8V4M14.500 8V4M11 4.500h1.500" stroke="#555" strokeWidth="1.500" />
      </Ic>
    ),
  },
];

const ProcessDock = () => (
  <div className="flex h-[279px] shrink-0">
    <div className="w-[29px] shrink-0 border-r border-t border-[#c8c4bf]">
      <VCell><Play s={15} /></VCell>
      <VSep />
      <VCell><ProcChip on /></VCell>
      <VCell><ProcChip mark="M1 9l5 5M6 9l-5 5" /></VCell>
      <VSep />
      <VCell><ProcChip mark="M1 11l2 3 4-5" /></VCell>
      <VSep />
      <VCell><Panes s={13} /></VCell>
    </div>
    <div className="flex min-w-0 flex-1 flex-col">
      <div className="flex h-[32px] shrink-0 items-center pl-[6px]">
        <Refresh s={16} />
        <span className="ml-[9px] text-[13.140px]">No Processes Running</span>
      </div>
      <div className="flex min-h-0 flex-1 flex-col border-2 border-[#b9b4af] bg-white">
        <Header c="h-[26px] pl-[4px]">
          <span className="flex-1">Processes: OR_RTL - Behavioral</span>
          <i className="h-[20px] w-[2px] border-l border-[#c8c4bf] bg-white" />
        </Header>
        {processes.map((p) => (
          <TreeRow key={p.t} {...p} />
        ))}
      </div>
    </div>
  </div>
);

const LeftTabs = () => (
  <div className="flex h-[25px] shrink-0 items-start pl-[1px] text-[13.200px]">
    <Tab w="w-[73px]" gap="ml-[9px]" icon={<Xilinx s={16} />} label="Start" />
    <Tab
      w="w-[85px]"
      gap="ml-[9px]"
      sel
      label="Design"
      icon={
        <Ic s={16}>
          <path d="M.5 3.500h7v7h-7z" fill="#cfe3fb" stroke="#1b3f8f" />
          <path d="M2 6h4M2 8h4M8 7h2M10 3v9h2M10 3h2" stroke="#1b3f8f" />
          <circle cx="13" cy="2.500" r="1.800" fill="#d05cc0" stroke="#444" strokeWidth=".6" />
          <circle cx="13" cy="8" r="1.800" fill="#3bb24e" stroke="#444" strokeWidth=".6" />
          <circle cx="13" cy="13" r="1.800" fill="#3355d0" stroke="#444" strokeWidth=".6" />
        </Ic>
      }
    />
    <Tab
      w="w-[71px]"
      gap="ml-[12px]"
      label="Files"
      icon={
        <Ic s={16}>
          <path d="M1 .5h7v10H1zM4 3h7v10H4zM7 5.500h5l2.500 2.500v7.500H7z" fill="#eaf2fc" stroke="#5f84c4" />
        </Ic>
      }
    />
    <div className="flex h-[23px] min-w-0 flex-1 items-center overflow-hidden border-y border-[#8d8883] bg-linear-to-b from-[#cbc5bf] to-[#e9e5e1] pl-[7px]">
      <svg width="8" height="16" fill="none">
        <path d="M8 .5H1v10h1.500M8 3H4v10h2M8 5.500H6.500v10H8" fill="#f7e46a" stroke="#2677c9" strokeWidth="1.200" />
      </svg>
    </div>
    <div className="flex h-[24px] w-[16px] items-center justify-center rounded-b-[3px] border border-[#aaa5a0] bg-[#efece8]">
      <svg width="6" height="10"><path d="M6 0v10L0 5z" fill="#b5b0ab" /></svg>
    </div>
    <div className="flex h-[24px] w-[16px] items-center justify-center rounded-b-[3px] border border-[#8a837c] bg-linear-to-b from-[#faf8f6] to-[#e6e2dd]">
      <svg width="6" height="10"><path d="M0 0v10l6-5z" fill="#000" /></svg>
    </div>
  </div>
);

/* ---------- schematic ---------- */

const SchematicTools = () => (
  <div className="w-[29px] shrink-0 border-l border-[#cfcac5] pr-[2px]">
    <div className="flex h-[559px] flex-col justify-between pt-[1px]">
      <VCell>
        <Ic s={17}>
          <rect x=".8" y=".8" width="14.500" height="14.500" stroke="#e01b24" strokeWidth="1.500" strokeDasharray="1.500 1.500" />
          <path d="M5 2v10.500l2.500-2 2 4 2-1-2-4H13z" fill="#111" />
        </Ic>
      </VCell>
      <VCell>
        <div className="flex h-[26px] w-[27px] shrink-0 items-center justify-center rounded-[3px] border border-[#8a837c] bg-[#cfc8c1]">
          <Ic s={17}>
            <path d="M2 2l5 4M14 2L9 6M2 14l5-4" stroke="#2267be" strokeWidth="1.600" />
            <path d="M0 0h5L0 5zM16 0v5l-5-5zM0 16v-5l5 5z" fill="#2267be" />
            <rect x="5.500" y="5" width="5" height="4" fill="#fff" stroke="#2267be" />
            <rect x="8.500" y="9.500" width="7" height="6" stroke="#e01b24" strokeWidth="1.500" strokeDasharray="1.500 1.500" />
          </Ic>
        </div>
      </VCell>
      <VSep />
      <VCell>
        <Ic s={17}>
          <path d="M5 1l1.200 2.800 3 .3-2.300 2 .7 3L5 7.500 2.400 9.100l.7-3-2.300-2 3-.3zM11.500 4.500l1.200 2.800 3 .3-2.300 2 .7 3-2.600-1.600-2.600 1.600.7-3-2.300-2 3-.3zM4.500 9.500l.9 2 2.200.2-1.700 1.500.5 2.300-1.900-1.200-2 1.200.6-2.300-1.700-1.500 2.200-.2z" fill="#f39a2b" stroke="#d9700e" strokeWidth=".5" />
        </Ic>
      </VCell>
      <VSep />
      <VCell><Ic s={15}><path d="M1 3h5v10H1M6 3l9 5-9 5z" stroke="#a09d99" strokeWidth="1.400" /><path d="M1 3c2 3 2 7 0 10" stroke="#a09d99" strokeWidth="1.200" /></Ic></VCell>
      <VCell><Ic s={15}><path d="M14 2v12H9V2zM9 3L1 8l8 5" stroke="#a09d99" strokeWidth="1.400" /></Ic></VCell>
      <VSep />
      <VCell><Ic s={16}><path d="M1 2h6v5H1z" stroke="#a09d99" strokeDasharray="1.500 1" strokeWidth="1.500" /><path d="M5 6.500h10v8H5z" fill="#ebe9e6" stroke="#8f8c88" /><path d="M5 6h10v3H5z" fill="#8f8c88" /></Ic></VCell>
      <VCell><Ic s={17}><path d="M1 1h6v9H1z" fill="#f1efec" stroke="#8f8c88" strokeWidth="1.400" /><path d="M9.500 7h6v8.500h-6z" fill="#dedbd7" stroke="#a09d99" strokeWidth="1.200" /><path d="M11 9l3 4M14 9l-3 4" stroke="#a09d99" /></Ic></VCell>
      <VCell><GrayChipPanel mark="M7 4.500h3v6H7z" s={14} /></VCell>
      <VCell><GrayChipPanel mark="M6.500 5.500l4 5M10.500 5.500l-4 5" s={14} /></VCell>
      <VSep />
      <VCell><Ic s={15}><path d="M0 3h4M0 6h4M0 9h4M0 12h4M11 3h5" stroke="#a5a29e" /><path d="M4 1.500h9v13H4z" stroke="#a09d99" /><path d="M6 4v8l6-4z" fill="#dedbd7" stroke="#8f8c88" /></Ic></VCell>
      <VCell><Ic s={16}><path d="M1 3h4v12H1z" fill="#d9eafb" stroke="#2f7bd0" /><path d="M5 13h11M7 11l3-9h2l3 9M8.500 8h5" stroke="#1a3f94" strokeWidth="1.700" /></Ic></VCell>
      <VSep />
      <VCell><Ic s={15}><path d="M8 1l4 5h-2v5H6V6H4z" fill="#96938f" /><path d="M4 9l-2 5h12l-2-5" stroke="#8a8783" strokeWidth="1.600" /></Ic></VCell>
      <VCell><GreenBall back /></VCell>
      <VCell><GreenBall gray /></VCell>
      <VCell><Ic s={16}><circle cx="9.500" cy="8.500" r="6" fill="#dfe9f2" stroke="#8a8d8f" strokeWidth="1.200" /><path d="M9.500 8.500l3-3M9.500 8.500v3" stroke="#345" strokeWidth="1.200" /><path d="M1 8c2-5 7-6 10-4" stroke="#3f9f52" strokeWidth="2" /><path d="M0 4l7 4-5 4z" fill="#2f8f42" /></Ic></VCell>
      <VSep />
      <VCell><Ic s={15}><path d="M1 1.500h5v9H1zM10 5.500h5V15h-5z" fill="#f1efec" stroke="#b0ada9" strokeWidth="1.300" /></Ic></VCell>
      <VCell><Ic s={16}><path d="M2 .5h12v11h-3.500L8.500 15.500 6.500 11.500H2z" fill="#5ec63a" stroke="#2f7d1c" /><path d="M5.500 2.500v7l6-3.500z" fill="#222" /></Ic></VCell>
    </div>
  </div>
);

const Schematic = () => (
  <svg width="1590" height="625" viewBox="313 146 1590 625" className="block shrink-0 bg-white">
    <g shapeRendering="crispEdges" fill="none">
      <path d="M528.500 146V771M1687.500 146V771" stroke="#808080" />
      <path d="M648.500 234.500h920v441h-920z" stroke="#0000ff" />
      <path d="M648 234h41l-41 41zM1526.500 234.500H1567v41zM649 634v40.500h40.500zM1567 633.500v41h-41z" fill="#0000ff" />
      <path d="M568 394.500h160M949 394.500h79M568 474.500h160M949 474.500h79M1188 434.500h79M1488 434.500h159" stroke="#0000ff" />
      <path d="M728 394.500h221M728 474.500h221M1267 434.500h221" stroke="#808000" />
      <path d="M1008 374.500H1104C1146 378 1172 398 1192.500 434.500C1172 472 1146 491 1104 495.500H1088.500L1087 494.500H1008" stroke="#0000ff" />
      <path d="M1007.500 376.500C1050 410 1050 460 1007.500 494.500" stroke="#0000ff" />
    </g>
    <g fill="#0000ff" className="font-['Liberation_Sans',Arial,sans-serif]">
      <text x="941" y="208" fontSize="69.700">OR_RTL:1</text>
      <text x="1064" y="339" fontSize="60.200">or2</text>
      <text x="970" y="569.500" fontSize="60">Y_imp_Y1</text>
      <text x="971" y="746.500" fontSize="69.700">OR_RTL</text>
      <g fontSize="30">
        <text x="587.500" y="389">B</text>
        <text x="588" y="469">A</text>
        <text x="963" y="389">I1</text>
        <text x="963" y="469">I0</text>
        <text x="1227" y="429">O</text>
        <text x="1606" y="429">Y</text>
      </g>
    </g>
  </svg>
);

const VScroll = () => (
  <div className="flex h-full w-[15px] shrink-0 flex-col">
    <SbBtn c="h-[15px] rounded-t-[3px]" d="M0 6h8L4 2z" />
    <div className="h-[73px] border-x border-[#8a837c] bg-[#d6ccc4]" />
    <div className="flex h-[453px] flex-col items-center justify-center gap-[2px] border border-[#8a837c] bg-linear-to-r from-[#faf8f6] to-[#e4e0db]">
      <i className="h-px w-[7px] bg-[#b5b0ab]" />
      <i className="h-px w-[7px] bg-[#b5b0ab]" />
      <i className="h-px w-[7px] bg-[#b5b0ab]" />
    </div>
    <div className="flex-1 border-x border-[#8a837c] bg-[#d6ccc4]" />
    <SbBtn c="mb-[1px] h-[15px] rounded-b-[3px]" d="M0 2h8L4 6z" />
  </div>
);

/* ---------- category dock ---------- */

const CatBox = ({ label, w }: { label: string; w: string }) => (
  <div className={`h-[77px] shrink-0 border border-[#a9a49f] bg-white ${w}`}>
    <Header c="h-[27px] pl-[5px] pt-[1px]">
      <span className="flex-1">{label}</span>
      <HArrow />
      <i className="ml-[7px] mr-[2px] h-[20px] w-[2px] border-l border-[#c8c4bf] bg-white" />
    </Header>
    <div className="flex h-[18px] items-center pl-[1px]">
      <svg width="23" height="18" fill="none">
        <Dots d="M10.500 0V5M11 9.500h8" />
        <Expander x={10.500} y={9.500} />
      </svg>
      <Hier />
      <span className="ml-[6px]">OR_RTL</span>
    </div>
  </div>
);

const CategoryDock = () => (
  <div className="flex h-[126px] shrink-0 flex-col border-t border-[#c8c4bf]">
    <div className="flex h-[19px] shrink-0 items-center border-b-2 border-l border-b-[#d6d2ce] border-l-[#cfcac5] pl-[4px] pr-[2px] text-[13.050px]">
      <span className="mb-[2px] flex-1 leading-none">View by Category</span>
      <DockButtons />
    </div>
    <div className="flex flex-1">
      <div className="flex w-[957px] flex-col">
        <div className="h-[24px] pt-px text-center text-[13.050px] font-bold leading-[16px]">Design Objects of Top Level Block</div>
        <div className="flex gap-[6px] pl-[4px]">
          <CatBox label="Instances" w="w-[312px]" />
          <CatBox label="Pins" w="w-[313px]" />
          <CatBox label="Signals" w="w-[312px]" />
        </div>
      </div>
      <div className="flex w-[10px] items-center pl-[1px] pt-[3px]"><VGrip /></div>
      <div className="flex flex-1 flex-col pr-[4px]">
        <div className="h-[24px] pl-[1px] pt-px text-center text-[13.050px] font-bold leading-[16px]">Properties: (No Selection)</div>
        <div className="h-[77px] border border-[#a9a49f] bg-white">
          <Header c="h-[27px] pl-[5px] pt-[1px]">
            <span className="w-[449px]">Name</span>
            <HArrow up />
            <i className="ml-[9px] h-[20px] w-[2px] border-l border-[#c8c4bf] bg-white" />
            <span className="ml-[3px]">Value</span>
          </Header>
        </div>
      </div>
    </div>
  </div>
);

const BottomTabs = () => (
  <div className="flex h-[25px] shrink-0 items-start">
    <Tab w="w-[93px] ml-[1px]" label="Console" icon={<Ic s={15}><path d="M1.500 .5h12v15h-12z" fill="#e3effc" stroke="#3d7edb" /><path d="M4.500 3h6M4.500 5.500h6M4.500 8h6M4.500 10.500h6M4.500 13h6" stroke="#1956b4" strokeWidth="1.200" /></Ic>} />
    <Tab w="w-[80px]" gap="ml-[11px]" label="Errors" icon={<Ic s={16}><circle cx="8" cy="8" r="7.500" fill="#e0301e" stroke="#9c1409" /><path d="M5.500 5.500l5 5M10.500 5.500l-5 5" stroke="#fff" strokeWidth="2" /></Ic>} />
    <Tab w="w-[102px]" gap="ml-[11px]" label="Warnings" icon={<Ic s={16}><path d="M8 1l7.500 14H.5z" fill="#f7d51e" stroke="#b58c08" strokeLinejoin="round" /><path d="M8 5.500v5" stroke="#222" strokeWidth="2" /><circle cx="8" cy="12.800" r="1.100" fill="#222" /></Ic>} />
    <Tab w="w-[169px]" gap="ml-[11px]" label="Find in Files Results" icon={<Ic s={16}><path d="M.5 12V1h5l1 2H12v6" fill="#f8dc68" stroke="#c29013" /><path d="M4 15l2-8h2v3h2V7h2l3 8h-4l-1-3H9l-1 3z" fill="#222" /></Ic>} />
    <Tab w="w-[156px]" sel label="View by Category" icon={<Ic s={15}><path d="M1 1h14v14H1z" fill="#bfd8f6" /><path d="M1 1h14v14H1zM4.500 1v14M8 1v14M11.500 1v14M1 4.500h14M1 8h14M1 11.500h14" stroke="#4a7fce" /></Ic>} />
    <div className="flex-1 border-t border-[#8d8883]" />
  </div>
);

/* ---------- bottom bars ---------- */

const GnomeBottom = () => (
  <div className="flex h-[25px] shrink-0 items-center border-t border-white bg-[#edecea] text-[13.500px]">
    <div className="ml-[4px] mr-[4px] h-[18px] w-[4px] bg-[radial-gradient(#bbb_30%,transparent_35%)] bg-[size:3px_3px]" />
    <div className="flex h-[22px] w-[206px] items-center whitespace-nowrap rounded-[3px] border border-[#8c8c88] bg-linear-to-b from-white to-[#e7e6e4] pl-[6px] text-[13.450px]">
      <Ic s={16}>
        <rect x=".5" y=".5" width="15" height="14.500" rx="1" fill="#8a9096" stroke="#2c3034" />
        <rect x="2.500" y="2.500" width="11" height="9.500" fill="#2b3238" />
        <path d="M4 4.500l2.500 2L4 8.500M7.500 9.500h4" stroke="#e8e8e8" strokeWidth="1.200" />
      </Ic>
      <span className="ml-[8px]">ise@localhost:~/Desktop</span>
    </div>
    <div className="ml-[2px] flex h-[22px] w-[207px] items-center whitespace-nowrap rounded-[3px] border border-[#8c8c88] bg-linear-to-b from-[#c6c5c3] to-[#d3d2cf] pl-[6px]">
      <Xilinx s={17} />
      <span className="ml-[8px]">ISE Project Navigator (P...</span>
    </div>
    <div className="ml-auto flex items-center">
      <Ic s={20} v={20} c="mr-[413px]">
        <path d="M1.500 4l1-3h15l1 3v13c0 1-1 1.500-2 1.500h-13c-1 0-2-.5-2-1.500z" fill="#3f74b8" stroke="#1c4680" />
        <path d="M2.500 2h15v3h-15z" fill="#214c8a" />
        <path d="M2 6h16" stroke="#8fb6e4" />
        <path d="M4 8h12v8H4z" fill="#4f86ca" />
      </Ic>
      <div className="mr-[1px] flex h-[22px] w-[41px] items-center justify-center rounded-[2px] border border-[#8c8c88] bg-[#d2e2f6]">
        <Xilinx s={17} />
      </div>
    </div>
  </div>
);

const VBoxStatus = () => {
  const B = "#1c5fbf";
  return (
    <div className="flex h-[25px] shrink-0 items-center justify-end gap-[3px] bg-[#f0f0f0] font-['Open_Sans','Segoe_UI',sans-serif] text-[12.630px]">
      <Ic s={20} v={20}><rect x="2.500" y="1" width="15" height="18" fill="#8ed6fb" stroke="#2b8bd0" /><circle cx="10" cy="8" r="6" fill="#fff" stroke="#3f9bd6" /><circle cx="10" cy="8" r="2" fill={B} /><path d="M5 16c4 1 6-3 5-7" stroke="#16449b" strokeWidth="2.500" /></Ic>
      <Ic s={20} v={20} c="ml-[2px]"><circle cx="10" cy="10" r="9.500" fill="#dadada" stroke="#cacaca" /><circle cx="10" cy="10" r="2.500" fill="#f0f0f0" stroke="#c0c0c0" /></Ic>
      <Ic s={20} v={20}><path d="M1 2l6 5v6l-6 5z" fill="#7fd0fb" stroke="#1e86c9" /><rect x="7" y="1" width="11" height="13" rx="4" fill="#57b8ef" stroke="#1672b5" /><path d="M8 4h9M8 7h9M8 10h9M12.500 14v4M8 18.500h10" stroke="#123f7d" strokeWidth="1.300" /></Ic>
      <Ic s={20} v={20}><path d="M6.500 1h12v11h-12z" fill="#2d7de0" stroke="#8a8a8a" /><path d="M1.500 6.500h13v9h-13z" fill={B} stroke="#e6e6e6" strokeWidth="1.500" /><path d="M4 18h9" stroke="#888" strokeWidth="1.500" /></Ic>
      <Ic s={20} v={20}><path d="M2 18c-2-3 1-5 3-8l6-4 4 4-5 6c-3 2-5 4-8 2z" fill="#7cc8f6" stroke="#2c86c4" /><path d="M12 5l3.500-4 4 4L16 9z" fill="#eee" stroke="#888" /></Ic>
      <Ic s={20} v={20}><path d="M1 4h10l2-3h6v18H1z" fill="#3c9fe6" /><path d="M1 5h18v14H1z" fill="#86d2fa" stroke="#3490d0" /></Ic>
      <Ic s={20} v={20}><path d="M.8 1h18.400v14.500H.8z" fill="#fff" stroke="#999" /><path d="M3.500 3.500h13v9h-13z" fill="#d4e8fb" stroke={B} strokeWidth="2" /><path d="M6.500 6h7v4h-7z" fill={B} /><path d="M4 18h12" stroke="#777" strokeWidth="2" /></Ic>
      <Ic s={20} v={20}><path d="M.8 7h15v11h-15z" fill={B} stroke="#999" /><path d="M5 2.500l3.500 2V1H19v9H8.500V6.500L5 8.500z" fill="#7d9ff0" stroke="#4667bb" /></Ic>
      <Ic s={20} v={20}><path d="M1 1l5 2 3-2h6l3 3v12l-4 3H6l-5 1 2-6-2-4z" fill="#5fd12f" stroke="#2c8a12" /><path d="M5 7l5 6 3-7M6 13l5 2" stroke="#14520a" strokeWidth="1.600" /><rect x="16.700" y=".8" width="2.600" height="18.400" fill="#8fe95e" stroke="#000" /></Ic>
      <Ic s={20} v={20}><circle cx="9.500" cy="10" r="9" fill="#8fd3f8" stroke="#2f8fcb" /><path d="M8 6h6l5 6-7 7-4-2 3-4-4-4z" fill="#7ed332" stroke="#3b8a14" /><circle cx="15" cy="3" r="1.500" fill="#164a96" /></Ic>
      <Ic s={20} v={20}><rect x=".5" y=".5" width="19" height="19" fill="#63bdf3" stroke="#2a86c8" /><path d="M7.500 4h5v6h4L10 16 3.500 10h4z" fill="#123a7e" /></Ic>
      <span className="mr-[1px] text-[#111]">Right Ctrl</span>
    </div>
  );
};

const TaskApp = ({ on, children }: Kids & { on?: boolean }) => (
  <div className="flex h-[50px] w-[62px] flex-col items-center">
    <div className="flex flex-1 items-center justify-center">{children}</div>
    <div className={`h-[3px] w-[51px] ${on ? "bg-[#76b9ed]" : ""}`} />
  </div>
);

const Taskbar = () => (
  <div className="flex h-[50px] shrink-0 items-center bg-[#1e1e22] font-['Open_Sans','Segoe_UI',sans-serif] text-white">
    <div className="flex w-[432px]">
      <div className="flex h-[50px] w-[60px] items-center justify-center">
        <Ic s={20} v={20}><path d="M0 2.700l8.200-1.100v7.900H0zM9.200 1.500L20 0v9.500H9.200zM0 10.500h8.200v7.900L0 17.300zM9.200 10.500H20V20L9.200 18.500z" fill="#fff" /></Ic>
      </div>
      <TaskApp><Ic s={22} v={22}><circle cx="13.500" cy="8" r="6.700" stroke="#fff" strokeWidth="1.500" /><path d="M9 13L1 21" stroke="#fff" strokeWidth="1.500" /></Ic></TaskApp>
      <TaskApp>
        <Ic s={24} v={24}>
          <g stroke="#fff">
            <circle cx="12" cy="12" r="6.600" strokeWidth="3" />
            <circle cx="12" cy="12" r="9.600" strokeWidth="3.600" strokeDasharray="3.770 3.770" strokeDashoffset="1.880" />
          </g>
        </Ic>
      </TaskApp>
      <TaskApp><Ic s={28} v={28} c="ml-[2px]"><path d="M0 3h10l2 3h15v19H0z" fill="#e9a61c" /><path d="M0 8l9-1 3-2h15v21H0z" fill="#fdd565" /><path d="M5 27V17c0-1 1-2 2-2h14c1 0 2 1 2 2v10h-5v-6H10v6z" fill="#2f8fdf" /></Ic></TaskApp>
      <TaskApp on><Ic s={31} v={31}><path d="M22 1L8.500 13.500 3 9.500 1 11l5 5-5 5 2 1.500 5.500-4L22 30l8-3.500v-22zM22.500 9v14l-9-7z" fill="#2296e8" fillRule="evenodd" /><path d="M22 1l8 3.500v22L22 30z" fill="#37abf4" /></Ic></TaskApp>
      <TaskApp on><Tux64 s={30} /></TaskApp>
      <TaskApp on>
        <Ic s={31} v={31}>
          <defs>
            <linearGradient id="edgeA" x1="0" y1="0" x2="1" y2=".5"><stop offset="0" stopColor="#2aa6df" /><stop offset=".5" stopColor="#32c3c0" /><stop offset="1" stopColor="#6bdc56" /></linearGradient>
            <linearGradient id="edgeB" x1="0" y1="0" x2="1" y2="1"><stop offset="0" stopColor="#1f8fdd" /><stop offset="1" stopColor="#0c4f9e" /></linearGradient>
          </defs>
          <circle cx="15.500" cy="15.500" r="15" fill="url(#edgeB)" />
          <path d="M.5 14C2 5 8 .5 15.500 .5 24 .5 30.500 7 30.500 14c0 4-3 6.500-7 6.500-3 0-5-1-5-2 0-.8 1.500-1.500 1.500-4 0-3-3-5.500-8-5.500C6 9 2 11 .5 14z" fill="url(#edgeA)" />
          <path d="M12 14c-2 7 4 13 13 11 1-.3 2 0 1 1C22 31 14 32 9.500 27 6 22 8 16 12 14z" fill="#0f5bb0" />
          <path d="M12.500 14c2-2.500 6-2.500 7 .5 0 2-1.500 3.200-1.500 4 0 1.500 3 2.500 6 2.300L29 19c-.5 3-1.500 5-3 6.200-7 1.800-14-4-13.500-11.200z" fill="#1e1e22" />
        </Ic>
      </TaskApp>
    </div>
    <div className="ml-auto flex items-center">
      <svg width="84" height="30" viewBox="0 0 84 30" fill="none" className="mr-[105px]">
        <path d="M0 2h61v25H0z" fill="#fff" />
        <path d="M3 5h55v19H3z" fill="#000" />
        <path d="M3 5h45v19H3z" fill="#1b9a4b" />
        <path d="M61 9h3v11h-3z" fill="#fff" />
        <text x="14" y="20.500" fontSize="16" fill="#fff" className="font-['Open_Sans',sans-serif]" textLength="34" lengthAdjust="spacingAndGlyphs">79%</text>
        <path d="M72 12h10v4c0 3-2 5-4 5v3h-2v-3c-2 0-4-2-4-5zM73.500 6h2v6h-2zM78.500 6h2v6h-2z" fill="#fff" />
      </svg>
      <svg width="26" height="26" viewBox="0 0 26 26">
        <defs><linearGradient id="sun" x1=".1" y1=".1" x2=".8" y2=".9"><stop offset="0" stopColor="#f4bf3a" /><stop offset="1" stopColor="#f2690c" /></linearGradient></defs>
        <circle cx="13" cy="13" r="12.500" fill="url(#sun)" />
      </svg>
      <span className="ml-[12px] w-[48px] pt-[2px] text-[17px]">24°C</span>
      <span className="w-[70px] pt-[2px] text-[16.850px]">Sunny</span>
      <Ic s={18} v={18}><path d="M1.500 12.500L9 5l7.500 7.500" stroke="#fff" strokeWidth="1.300" /></Ic>
      <Ic s={20} v={20} c="ml-[11px]"><rect x="2.500" y="0" width="15" height="20" rx="6.500" fill="#0a84f5" /><path d="M6.500 6.500l7 7L10 16.500V3.500l3.500 3-7 7" stroke="#fff" strokeWidth="1.300" /></Ic>
      <Ic s={22} v={22} c="ml-[9px]">
        <path d="M10 1c3 2.500 6 3 9 3v6c0 5-4 8-9 10-5-2-9-5-9-10V4c3 0 6-.5 9-3z" fill="#fff" />
        <path d="M10 1v19M1 9.500h18" stroke="#1e1e22" strokeWidth="1.200" />
        <circle cx="16" cy="15" r="5.500" fill="#17944a" />
        <path d="M13.500 15l2 2 3.200-3.800" stroke="#fff" strokeWidth="1.300" />
      </Ic>
      <Ic s={22} v={22} c="ml-[8px]"><path d="M6 7.500h14v9H4.500v-4M20 10h1.500v4H20" stroke="#fff" strokeWidth="1.200" /><path d="M9 9.500h5v5H9z" fill="#fff" /><path d="M2 4v3M5 4v3M1 7h5v2c0 1-1 2-2.500 2S1 10 1 9zM3.500 11v3" stroke="#fff" strokeWidth="1.200" /></Ic>
      <Ic s={22} v={22} c="ml-[9px]"><rect x="4" y="6.500" width="10" height="9.500" rx="1" stroke="#fff" strokeWidth="1.300" /><path d="M14 10l4-2.500v8L14 13M5 3.500c3-2 6-2 9 0M5 19c3 2 6 2 9 0" stroke="#fff" strokeWidth="1.200" /></Ic>
      <Ic s={22} v={22} c="ml-[7px]"><path d="M1 14c0-3 3-4 5-4 1-3 4-5 7-4 2 .5 3.500 2.500 3.500 4 3 0 4.500 2 4.500 4s-1.500 3.500-4 3.500H5c-2.500 0-4-1.500-4-3.500z" fill="#fff" /><path d="M6 10c1-3 4-5 7-4 2 .5 3.500 2.500 3.500 4L12 13z" fill="#b9b9b9" /></Ic>
      <Ic s={20} v={20} c="ml-[9px]"><path d="M1.500 17C2 9 8 3 16.500 3M5 18c.5-6 5-11 11.500-11M8.800 18.500c.5-4 3.500-7.500 7.700-7.500" stroke="#fff" strokeWidth="1.300" /><circle cx="14.500" cy="17" r="1.800" fill="#fff" /></Ic>
      <Ic s={22} v={22} c="ml-[8px]"><path d="M1 8.500h3.500L9 4.500v13l-4.500-4H1z" stroke="#fff" strokeWidth="1.200" /><path d="M12 8.500c1.200 1.500 1.200 3.500 0 5M15 6.500c2.200 2.500 2.200 6.500 0 9M18 4.500c3 3.500 3 9.500 0 13" stroke="#fff" strokeWidth="1.200" /></Ic>
      <Ic s={22} v={22} c="ml-[14px]"><path d="M9 15L16 2.500c1-1.500 3.500 0 2.500 1.500L11.500 16 8.500 18zM8 10c-5 1-7 5-6 8 3 2 7-3 10-7 3-2 7 0 8-3" stroke="#fff" strokeWidth="1.300" /></Ic>
      <svg width="32" height="18" viewBox="0 0 32 18" fill="none" className="ml-[13px]"><rect x="1" y="1" width="29" height="16" stroke="#fff" strokeWidth="1.200" /><path d="M4 5h23M4 9h23M9 13h13M4 13h3M24 13h3" stroke="#fff" strokeWidth="1.600" strokeDasharray="1.800 1.500" /></svg>
      <span className="ml-[12px] w-[30px] text-[14.800px]">ENG</span>
      <div className="ml-[14px] w-[77px] text-center text-[14.650px] leading-[23px]">
        <div>07:51</div>
        <div>26-02-2023</div>
      </div>
      <svg width="46" height="50" viewBox="0 0 46 50" fill="none" className="ml-[18px] mr-[3px]">
        <path d="M4 15h20v15H12l-4 5v-5H4z" fill="#fff" />
        <path d="M8 19h12M8 22.500h12M8 26h8" stroke="#1e1e22" strokeWidth="1.400" />
        <circle cx="23.500" cy="34.500" r="10" fill="#3d3d41" stroke="#8a8a8c" />
        <text x="19.500" y="40" fontSize="14.500" fill="#fff" className="font-['Open_Sans',sans-serif]">1</text>
      </svg>
      <div className="mr-[5px] h-[50px] w-px bg-[#6b6b6e]" />
    </div>
  </div>
);

export default function App() {
  return (
    <div className="flex h-[1080px] w-[1920px] flex-col overflow-hidden bg-[#eeebe6] font-['DejaVu_Sans',Verdana,sans-serif] text-[13.100px] leading-[16px] text-[#111]">
      <WindowsTitle />
      <GnomeTop />
      <WindowBar />
      <MenuBar />
      <ToolBar />
      <div className="flex h-[656px] shrink-0">
        <div className="flex w-[277px] shrink-0 flex-col">
          <DesignDock />
          <div className="flex h-[7px] shrink-0 items-center justify-center"><HGrip /></div>
          <ProcessDock />
          <LeftTabs />
        </div>
        <div className="flex w-[6px] shrink-0 items-center pl-[1px]">
          <VGrip />
        </div>
        <div className="flex min-w-0 flex-1 flex-col">
          <div className="flex h-[629px] border-b-2 border-[#b6b1ac]">
            <SchematicTools />
            <div className="flex flex-1 border-l border-t-2 border-[#c8c4bf] bg-white">
              <Schematic />
              <VScroll />
            </div>
            <div className="w-[2px] border-r border-[#b6b1ac]" />
          </div>
          <div className="flex items-start text-[13.100px]">
            <EditorTab w="w-[408px] rounded-bl-[3px] border-l" icon={<TextPage s={16} />} label="OR_RTL.vhd" />
            <EditorTab w="w-[412px] rounded-b-[3px]" icon={<Sigma s={13} />} label="Design Summary (Synthesized)" />
            <EditorTab w="w-[407px]" sel icon={<SchemPage s={16} />} label="OR_RTL (RTL1)" />
            <div className="flex-1 border-t border-[#8d8883]" />
          </div>
        </div>
      </div>
      <div className="flex h-[6px] shrink-0 items-center justify-center"><HGrip /></div>
      <CategoryDock />
      <BottomTabs />
      <div className="flex flex-1 items-center justify-end pr-[4px] text-[12.850px]">[472,524]</div>
      <GnomeBottom />
      <VBoxStatus />
      <Taskbar />
    </div>
  );
}
